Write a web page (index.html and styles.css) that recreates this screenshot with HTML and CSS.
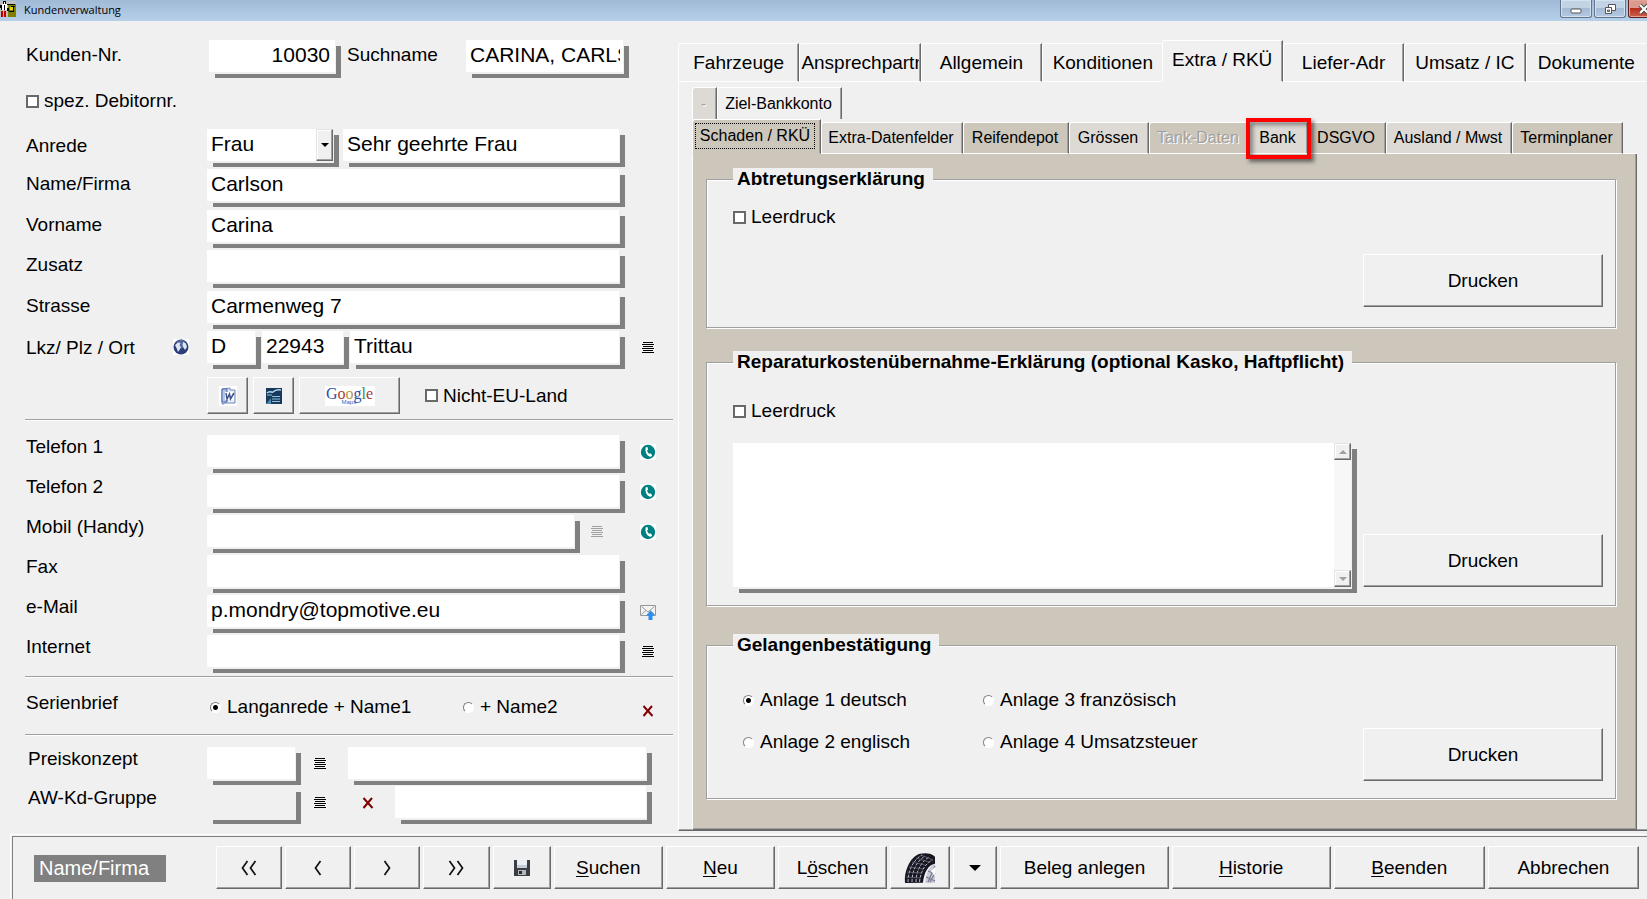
FILE: index.html
```html
<!DOCTYPE html>
<html lang="de">
<head>
<meta charset="utf-8">
<title>Kundenverwaltung</title>
<link rel="stylesheet" href="styles.css">
</head>
<body>
<svg class="defs" aria-hidden="true">
  <symbol id="i-list" viewBox="0 0 12 12"><path d="M1 0h10v1H1zM0 2h12v1H0zM1 4h10v1H1zM0 6h12v1H0zM1 8h10v1H1zM0 10h12v1H0z" fill="currentColor" shape-rendering="crispEdges"/></symbol>
  <symbol id="i-x" viewBox="0 0 12 12"><path d="M1.500 1L10.500 11M10 1L1.500 11" stroke="#800000" stroke-width="2" fill="none"/></symbol>
  <symbol id="i-phone" viewBox="0 0 16 16"><path fill="#fff" d="M0 0h16v16H0z"/><circle cx="8" cy="8" r="7.200" fill="#008080"/><path d="M5.800 3.200L7.400 3l.8 2.700-1.200.9c.4 1.300 1 2.300 2 3.200l1.400-.5 1.800 2-1.200 1.500C7.500 13 4.300 7.500 5.800 3.200z" fill="#fff"/></symbol>
  <symbol id="i-left" viewBox="0 0 8 16"><path d="M6.500 1L1.500 8l5 7" stroke="#111" stroke-width="1.700" fill="none"/></symbol>
  <symbol id="i-right" viewBox="0 0 8 16"><path d="M1.500 1l5 7-5 7" stroke="#111" stroke-width="1.700" fill="none"/></symbol>
</svg>

<div class="window">
  <header class="titlebar">
    <svg class="app-icon" width="16" height="16" viewBox="0 0 16 16" shape-rendering="crispEdges">
      <path fill="#c0c0c0" d="M0 0h16v16H0z"/><path fill="#808000" d="M8 3h8v13H8z"/>
      <path fill="#000" d="M3 0h3v3H3zM7 3h8v1H7zM0 4h2v3H0zM7 7h2v3H7zM11 5h4v1h-4zM9 10h5v1H9zM13 6h1v5h-1z"/>
      <path fill="#fff" d="M2 3h5v6H2zM4 1h1v2H4z"/><path fill="#e0d800" d="M10 6h3v3h-3z"/>
      <path fill="#000" d="M4 4h1v5H4zM1 7h1v2H1z"/><path fill="#c00000" d="M1 10h2v6H1zM4 10h2v6H4z"/>
    </svg>
    <h1>Kundenverwaltung</h1>
    <div class="win-buttons">
      <button class="win-btn" aria-label="Minimieren"><svg width="14" height="14" viewBox="0 0 14 14"><rect x="2" y="7" width="10" height="4" rx="1" fill="#fff" stroke="#555"/></svg></button>
      <button class="win-btn" aria-label="Wiederherstellen"><svg width="14" height="14" viewBox="0 0 14 14"><path d="M5.500 2.500h7v6h-7z" fill="#fff" stroke="#555"/><path d="M2.500 5.500h6v6h-6z" fill="#fff" stroke="#555"/><path d="M4.500 8h2v1.500h-2z" fill="none" stroke="#555"/></svg></button>
      <button class="win-btn close" aria-label="Schließen"><svg width="14" height="14" viewBox="0 0 14 14"><path d="M3 3l8 8M11 3l-8 8" stroke="#444" stroke-width="4"/><path d="M3 3l8 8M11 3l-8 8" stroke="#fff" stroke-width="2.200"/></svg></button>
    </div>
  </header>

  <div class="main">
    <form class="customer">
      <div class="row row-top">
        <label for="nr">Kunden-Nr.</label>
        <input class="field num" id="nr" value="10030">
        <label for="such">Suchname</label>
        <input class="field search" id="such" value="CARINA, CARLSON">
      </div>
      <label class="check debitor"><input type="checkbox">spez. Debitornr.</label>

      <div class="group address">
        <div class="row low">
          <label for="anrede">Anrede</label>
          <div class="fields wide">
            <div class="combo"><select class="field" id="anrede"><option>Frau</option><option>Herr</option><option>Firma</option></select><span class="combo-arrow"></span></div>
            <input class="field grow" aria-label="Briefanrede" value="Sehr geehrte Frau">
          </div>
        </div>
        <div class="row"><label for="name">Name/Firma</label><input class="field" id="name" value="Carlson"></div>
        <div class="row"><label for="vorname">Vorname</label><input class="field" id="vorname" value="Carina"></div>
        <div class="row"><label for="zusatz">Zusatz</label><input class="field" id="zusatz"></div>
        <div class="row"><label for="strasse">Strasse</label><input class="field" id="strasse" value="Carmenweg 7"></div>
        <div class="row low">
          <div class="label-icon"><label for="lkz">Lkz/ Plz / Ort</label>
            <button type="button" class="icon-btn" aria-label="Karte"><svg width="16" height="16" viewBox="0 0 16 16"><path fill="#fff" d="M0 0h16v16H0z"/><circle cx="8" cy="8" r="7.500" fill="#2c3f78"/><circle cx="8" cy="5" r="4.500" fill="#6f83b4" opacity=".6"/><path d="M2 6l3-2.500 2.500.5-1 2.500L8 8l-1.500 3-1.500 2-1-3zM10 3l3 1.500L14 8l-2 3-1.500-2.500-1-2z" fill="#dfe5f2"/></svg></button>
          </div>
          <div class="fields tight">
            <input class="field lkz" id="lkz" value="D">
            <input class="field plz" aria-label="Plz" value="22943">
            <input class="field grow" aria-label="Ort" value="Trittau">
          </div>
          <button type="button" class="icon-btn side" aria-label="Ortsliste"><svg width="12" height="12"><use href="#i-list"/></svg></button>
        </div>
      </div>

      <div class="row tools">
        <div class="fields">
          <button type="button" class="btn small" aria-label="Word"><svg width="18" height="20" viewBox="0 0 18 20"><path fill="#fff" d="M0 0h18v20H0z"/><path d="M3 3l8-1v2h5v13H5v1H3z" fill="#e8eef8" stroke="#6f86bb"/><path d="M3 3h5v13H3z" fill="#b6c6e6" stroke="#4a68ab"/><path d="M6 6h9v8H6z" fill="#fff"/><path d="M7 7l1 6 2.500-5 1 5L15 7" fill="none" stroke="#3a4f88" stroke-width="1.500"/></svg></button>
          <button type="button" class="btn small" aria-label="Writer"><svg width="16" height="16" viewBox="0 0 16 16"><path fill="#173a5c" d="M0 0h16v16H0z"/><path d="M1 5c3-3 5 0 6-1s4-3 8-2" stroke="#b9d6e8" fill="none" stroke-width="1.500"/><path d="M1 7h5M6 8.500h8M6 11h8M6 13.500h8" stroke="#8fc0dc"/><path d="M0 16l5-6v6z" fill="#4c86aa"/></svg></button>
          <button type="button" class="btn google"><span class="g-logo"><b class="g1">G</b><b class="g2">o</b><b class="g3">o</b><b class="g1">g</b><b class="g4">l</b><b class="g2">e</b><i>Maps</i></span></button>
          <label class="check"><input type="checkbox">Nicht-EU-Land</label>
        </div>
      </div>

      <hr>
      <div class="group contact">
        <div class="row high"><label for="tel1">Telefon 1</label><input class="field" id="tel1"><button type="button" class="icon-btn side" aria-label="Anrufen"><svg width="16" height="16"><use href="#i-phone"/></svg></button></div>
        <div class="row high"><label for="tel2">Telefon 2</label><input class="field" id="tel2"><button type="button" class="icon-btn side" aria-label="Anrufen"><svg width="16" height="16"><use href="#i-phone"/></svg></button></div>
        <div class="row high"><label for="mobil">Mobil (Handy)</label>
          <div class="fields"><input class="field grow" id="mobil"><button type="button" class="icon-btn mobile-list" aria-label="Liste" disabled><svg width="12" height="12"><use href="#i-list"/></svg></button></div>
          <button type="button" class="icon-btn side" aria-label="Anrufen"><svg width="16" height="16"><use href="#i-phone"/></svg></button></div>
        <div class="row high"><label for="fax">Fax</label><input class="field" id="fax"></div>
        <div class="row high"><label for="mail">e-Mail</label><input class="field" id="mail" value="p.mondry@topmotive.eu"><button type="button" class="icon-btn side" aria-label="E-Mail senden"><svg width="16" height="16" viewBox="0 0 16 16"><path d="M.5 1.500h15v10H.5z" fill="#f4f4f4" stroke="#999"/><path d="M1.500 2.500L8 8l6.500-5.500M1.500 10.500L6 6.500M14.500 10.500L10 6.500" stroke="#999" fill="none"/><path d="M10.500 6.500L15 11.500h-2.500V16H8.500v-4.500H6z" fill="#2b8ff0"/></svg></button></div>
        <div class="row high"><label for="web">Internet</label><input class="field" id="web"><button type="button" class="icon-btn side" aria-label="Internetliste"><svg width="12" height="12"><use href="#i-list"/></svg></button></div>
      </div>

      <hr class="hr-mid">
      <div class="row high serial">
        <span class="caption">Serienbrief</span>
        <div class="fields">
          <label class="radio first"><input type="radio" name="serie" checked>Langanrede + Name1</label>
          <label class="radio"><input type="radio" name="serie">+ Name2</label>
        </div>
        <button type="button" class="icon-btn side x-low" aria-label="Löschen"><svg width="12" height="12"><use href="#i-x"/></svg></button>
      </div>
      <hr class="hr-low">

      <div class="group pricing">
        <div class="row high price"><label for="preis">Preiskonzept</label>
          <div class="fields"><input class="field code" id="preis"><button type="button" class="icon-btn lst" aria-label="Liste"><svg width="12" height="12"><use href="#i-list"/></svg></button><span class="gap-small"></span><input class="field grow" aria-label="Preiskonzept Bezeichnung"></div></div>
        <div class="row high price"><label for="aw">AW-Kd-Gruppe</label>
          <div class="fields"><input class="field code muted" id="aw"><button type="button" class="icon-btn lst" aria-label="Liste"><svg width="12" height="12"><use href="#i-list"/></svg></button><button type="button" class="icon-btn clear" aria-label="Entfernen"><svg width="12" height="12"><use href="#i-x"/></svg></button><input class="field grow" aria-label="Gruppe Bezeichnung"></div></div>
      </div>
    </form>

    <section class="details">
      <nav class="tabs">
        <button class="tab"><span>Fahrzeuge</span></button>
        <button class="tab"><span>Ansprechpartner</span></button>
        <button class="tab"><span>Allgemein</span></button>
        <button class="tab flat"><span>Konditionen</span></button>
        <button class="tab active"><span>Extra / RKÜ</span></button>
        <button class="tab"><span>Liefer-Adr</span></button>
        <button class="tab"><span>Umsatz / IC</span></button>
        <button class="tab last"><span>Dokumente</span></button>
      </nav>
      <div class="panel">
        <div class="subtabs upper">
          <button class="subtab light t-dash" disabled>-</button>
          <button class="subtab plain t-ziel">Ziel-Bankkonto</button>
        </div>
        <div class="subtabs">
          <button class="subtab current t-schaden"><span>Schaden / RKÜ</span></button>
          <button class="subtab light t-extra">Extra-Datenfelder</button>
          <button class="subtab t-reifen">Reifendepot</button>
          <button class="subtab light t-groessen">Grössen</button>
          <button class="subtab t-tank" disabled>Tank-Daten</button>
          <button class="subtab light t-bank">Bank</button>
          <button class="subtab t-dsgvo">DSGVO</button>
          <button class="subtab light t-ausland">Ausland / Mwst</button>
          <button class="subtab t-termin">Terminplaner</button>
          <span class="subtab-rest"></span>
        </div>
        <div class="page">
          <fieldset class="box box-1">
            <legend>Abtretungserklärung</legend>
            <label class="check"><input type="checkbox">Leerdruck</label>
            <button class="btn print">Drucken</button>
          </fieldset>
          <fieldset class="box box-2">
            <legend>Reparaturkostenübernahme-Erklärung (optional Kasko, Haftpflicht)</legend>
            <label class="check"><input type="checkbox">Leerdruck</label>
            <div class="memo">
              <textarea aria-label="Text zur Reparaturkostenübernahme"></textarea>
              <div class="scroll"><button class="btn up" aria-label="Nach oben"></button><button class="btn down" aria-label="Nach unten"></button></div>
            </div>
            <button class="btn print">Drucken</button>
          </fieldset>
          <fieldset class="box box-3">
            <legend>Gelangenbestätigung</legend>
            <div class="options">
              <label class="radio"><input type="radio" name="anlage" checked>Anlage 1 deutsch</label>
              <label class="radio"><input type="radio" name="anlage">Anlage 3 französisch</label>
              <label class="radio"><input type="radio" name="anlage">Anlage 2 englisch</label>
              <label class="radio"><input type="radio" name="anlage">Anlage 4 Umsatzsteuer</label>
            </div>
            <button class="btn print">Drucken</button>
          </fieldset>
        </div>
      </div>
    </section>
  </div>

  <footer class="bar">
    <span class="mode">Name/Firma</span>
    <div class="bar-buttons">
      <button class="btn b-nav" aria-label="Erster"><svg width="8" height="16"><use href="#i-left"/></svg><svg width="8" height="16"><use href="#i-left"/></svg></button>
      <button class="btn b-nav" aria-label="Zurück"><svg width="8" height="16"><use href="#i-left"/></svg></button>
      <button class="btn b-nav" aria-label="Weiter"><svg width="8" height="16"><use href="#i-right"/></svg></button>
      <button class="btn b-nav" aria-label="Letzter"><svg width="8" height="16"><use href="#i-right"/></svg><svg width="8" height="16"><use href="#i-right"/></svg></button>
      <button class="btn b-save" aria-label="Speichern"><svg width="16" height="16" viewBox="0 0 16 16"><path fill="#3b3d45" d="M0 0h16v16H0z"/><path fill="#e9eef5" d="M3 0h10v8H3z"/><path fill="#c5ccd8" d="M3 5h10v3H3z"/><path fill="#b4b6ba" d="M4 10h8v5H4z"/><path fill="#2a2c33" d="M5 11h3v3H5z"/></svg></button>
      <button class="btn b-std"><span><u>S</u>uchen</span></button>
      <button class="btn b-std"><span><u>N</u>eu</span></button>
      <button class="btn b-std"><span>L<u>ö</u>schen</span></button>
      <button class="btn b-tire" aria-label="Reifen"><svg width="32" height="30" viewBox="0 0 32 30">
        <path d="M1 30C0 17 7 3 16 1c6-1.500 12-.5 15 3v26z" fill="#f6f6fa"/>
        <path d="M1 30C0 17 7 3 16 .8c6-1.200 12-.3 15 3v7c-7 1-11 9-12 19z" fill="#17171f"/>
        <path d="M4 29C4 18 9 7 18 2M8 29c0-11 4-20 13-26M12 29c0-10 4-19 13-25M15.500 29c1-10 5-18 13-22" fill="none" stroke="#b9bcd0" stroke-width="1" stroke-dasharray="3 1.300"/>
        <path d="M2 24l14 1M3 19l14 1M5 14l14 2M8 9l13 3M12 5l13 4M17 2l12 5" stroke="#696b7c" stroke-width=".8"/>
        <path d="M31 11c-6 2-9 9-10 19h10z" fill="#c9cbd9"/>
        <path d="M31 13l-7 16M31 20l-5 9M24 18l7 3M22 24l9 4" stroke="#777990" stroke-width="1.200"/>
        <path d="M31 14l-4 4 4 5z" fill="#fff"/>
      </svg></button>
      <button class="btn b-drop" aria-label="Weitere"><span class="tri"></span></button>
      <button class="btn b-beleg">Beleg anlegen</button>
      <button class="btn b-hist"><span><u>H</u>istorie</span></button>
      <button class="btn b-end"><span><u>B</u>eenden</span></button>
      <button class="btn b-end">Abbrechen</button>
    </div>
  </footer>
</div>
</body>
</html>
```
FILE: styles.css
```css
:root {
  --face: #f0f0f0;
  --tan: #ccc6bb;
  --tan-light: #dddad5;
  --shade: #a0a0a0;
  --dark: #696969;
  --drop: #808080;
}
* { box-sizing: border-box; }
body {
  margin: 0;
  background: var(--face);
  color: #000;
  font-family: "Liberation Sans", Arial, sans-serif;
  font-size: 19px;
  line-height: 22px;
}
button, input, select, textarea { font: inherit; color: inherit; margin: 0; border-radius: 0; }
svg { display: block; }
.defs { position: absolute; width: 0; height: 0; }
.window { display: flex; flex-direction: column; min-height: 100vh; overflow: hidden; }

/* title bar */
.titlebar {
  display: flex;
  height: 21px;
  background: linear-gradient(#a0b9d6, #b7d0ea);
  overflow: hidden;
}
.app-icon { margin-top: 1px; flex: none; }
.titlebar h1 { margin: 0 0 0 8px; flex: 1; font: 11px/20px "Open Sans", "Noto Sans", sans-serif; }
.win-buttons { display: flex; gap: 2px; margin-right: -13px; }
.win-btn {
  width: 32px;
  height: 18px;
  padding: 0;
  display: flex;
  align-items: center;
  justify-content: center;
  border: 1px solid #63748c;
  border-top: 0;
  border-radius: 0 0 3px 3px;
  box-shadow: inset 0 0 0 1px #d5e2f0;
  background: linear-gradient(#c3d3e6 45%, #a4bad4 50%, #b4cae2);
}
.win-btn.close { border-color: #5d1d18; box-shadow: inset 0 0 0 1px #e2a59a; background: linear-gradient(#dc9a8c 45%, #b8301c 50%, #c9604c); }

/* two columns */
.main { display: flex; flex: 1; }
.customer { flex: 1 1 678px; min-width: 0; padding: 19px 5px 11px 25px; }
.details { flex: 1 1 969px; min-width: 0; display: flex; flex-direction: column; padding-top: 19px; }

/* form rows */
.row { display: grid; grid-template-columns: 182px minmax(0, 1fr) 54px; align-items: start; }
.row > label, .caption, .label-icon > label { padding-left: 1px; line-height: 30px; white-space: nowrap; }
.low > label, .low .label-icon > label { padding-top: 2px; }
.high > label, .high > .caption { line-height: 23px; }
.label-icon { display: flex; justify-content: space-between; padding-right: 18px; }
.label-icon .icon-btn { padding-top: 0; }
.field {
  display: block;
  width: 100%;
  min-width: 0;
  height: 32px;
  padding: 0 3px 2px 4px;
  border: 0;
  outline: 0;
  background: #fff;
  font-size: 21px;
  box-shadow: 1px 2px 0 var(--face), 6px 6px 0 var(--drop);
}
.field.muted { background: var(--face); }
.num { text-align: right; padding-right: 5px; }
.row-top { grid-template-columns: 184px 126px 131px minmax(0, 1fr); padding-right: 50px; }
.row-top > .num + label { padding-left: 12px; }
.check, .radio { display: flex; align-items: center; white-space: nowrap; }
.check input {
  appearance: none;
  width: 13px;
  height: 13px;
  margin-right: 5px;
  border: 2px solid var(--dark);
  background: #fff;
}
.radio input {
  appearance: none;
  width: 11px;
  height: 11px;
  margin-right: 6px;
  border: 1px solid;
  border-color: #808080 #fff #fff #808080;
  border-radius: 50%;
  background: #fff;
}
.radio input:checked { background: radial-gradient(circle, #000 0 2px, #fff 3px); }
.debitor { margin: 18px 0 17px; padding-left: 1px; }

.group { display: flex; flex-direction: column; gap: 8px; }
.address .row:nth-child(odd) { padding-top: 1px; }
.address .row:first-child { padding-top: 0; }
.fields { display: flex; align-items: flex-start; }
.wide { gap: 10px; }
.tight { gap: 7px; }
.grow { flex: 1; }
.lkz { width: 48px; }
.plz { width: 81px; }
.combo { position: relative; width: 126px; }
.combo select { appearance: none; }
.combo-arrow {
  position: absolute;
  top: 0;
  right: 0;
  width: 17px;
  height: 32px;
  background: var(--face);
  border: 1px solid;
  border-color: #e3e3e3 var(--dark) var(--dark) #e3e3e3;
  box-shadow: inset -1px -1px var(--shade), inset 1px 1px #fff;
  pointer-events: none;
}
.combo-arrow::after {
  content: "";
  position: absolute;
  left: 4px;
  top: 13px;
  border: 4px solid transparent;
  border-top-color: #000;
  border-bottom: 0;
}
.icon-btn {
  display: flex;
  align-items: center;
  justify-content: center;
  height: 32px;
  padding: 2px 0 0;
  border: 0;
  background: none;
  color: #000;
}
.icon-btn:disabled { color: var(--shade); }
.side { padding-left: 4px; }
.x-low { padding-top: 8px; }
.mobile-list { width: 45px; padding-right: 0; }

/* raised buttons */
.btn {
  display: flex;
  align-items: center;
  justify-content: center;
  padding: 0;
  background: var(--face);
  border: 1px solid;
  border-color: #fff var(--dark) var(--dark) #fff;
  box-shadow: inset -1px -1px var(--shade);
  white-space: nowrap;
}
.tools { margin-top: 14px; }
.tools .fields { grid-column: 2 / 4; align-items: center; gap: 5px; }
.small { width: 41px; height: 37px; }
.google { width: 101px; height: 37px; }
.tools .check { margin-left: 20px; }
.g-logo {
  position: relative;
  width: 50px;
  height: 20px;
  background: #fff;
  font: 16px/15px "Liberation Serif", serif;
}
.g-logo b { font-weight: 400; }
.g-logo i { position: absolute; left: 17px; top: 13px; font: 6px/6px "Liberation Sans", sans-serif; color: #3c62b8; }
.g1 { color: #2b4fa8; }
.g2 { color: #b03a3a; }
.g3 { color: #b39a2c; }
.g4 { color: #3d8a4c; }

hr { margin: 5px 0 14px; height: 2px; border: 0; border-top: 1px solid var(--shade); border-bottom: 1px solid #fff; }
.hr-mid { margin: 9px 0 13px; }
.hr-low { margin: 11px 0; }
.serial .radio { line-height: 32px; }
.serial .fields { padding-left: 3px; }
.serial .first { width: 253px; }
.pricing { gap: 7px; }
.price { grid-template-columns: 182px minmax(0, 1fr); padding-right: 27px; }
.price > label { padding-left: 3px; }
.code { width: 88px; }
.lst { width: 38px; padding-left: 12px; }
.gap-small { width: 15px; }
.clear { width: 62px; padding-left: 8px; }

/* main tabs */
.tabs { display: flex; align-items: flex-end; height: 42px; }
.tab {
  flex: 1 1 0;
  min-width: 0;
  height: 39px;
  padding: 0 1px;
  background: var(--face);
  border: 1px solid #fff;
  border-right-color: var(--dark);
  border-radius: 3px 0 0 0;
  box-shadow: inset -1px 0 var(--shade);
}
.tab span { display: block; overflow: hidden; white-space: nowrap; }
.tab.active { height: 42px; margin-left: -2px; padding-bottom: 2px; border-bottom-color: var(--face); }
.tab.flat, .tab.last { border-right-color: #fff; box-shadow: none; }
.tab.last { border-right-color: var(--face); }
.panel {
  flex: 1;
  display: flex;
  flex-direction: column;
  padding: 5px 10px 0 13px;
  border-left: 1px solid #fff;
  border-bottom: 1px solid var(--dark);
  box-shadow: inset 0 -1px var(--shade);
}

/* inner tabs */
.subtabs { display: flex; align-items: flex-end; height: 35px; font-size: 16px; }
.upper { height: 32px; }
.subtab {
  height: 32px;
  padding: 0 2px 0 0;
  background: var(--tan);
  border: 1px solid #fff;
  border-right-color: var(--dark);
  border-radius: 3px 0 0 0;
  box-shadow: inset -1px 0 var(--shade);
  white-space: nowrap;
}
.light { background: var(--tan-light); }
.plain { background: var(--face); }
.upper .subtab { border-bottom: 0; }
.subtab:disabled { color: var(--shade); text-shadow: 1px 1px #fff; }
.current { height: 35px; border-bottom-color: var(--tan); padding: 3px 5px 4px 2px; }
.current span { display: block; height: 26px; line-height: 24px; border: 1px dotted #000; }
.subtab-rest { flex: 1; border-bottom: 1px solid #fff; }
.t-dash { flex: 0 1 25px; }
.t-ziel { flex: 0 1 125px; }
.t-schaden { flex: 0 1 129px; }
.t-extra { flex: 0 1 142px; }
.t-reifen { flex: 0 1 106px; }
.t-groessen { flex: 0 1 80px; }
.t-tank { flex: 0 1 100px; }
.t-bank { flex: 0 1 59px; position: relative; z-index: 1; }
.t-dsgvo { flex: 0 1 78px; }
.t-ausland { flex: 0 1 126px; }
.t-termin { flex: 0 1 111px; }
.t-bank::after {
  content: "";
  position: absolute;
  inset: -5px -4px -6px;
  border: 4px solid #f00;
  box-shadow: 3px 3px 4px rgba(0, 0, 0, .5), inset 3px 3px 4px rgba(0, 0, 0, .4);
}

/* page of group boxes */
.page {
  flex: 1;
  padding: 14px 20px 29px 13px;
  background: var(--tan);
  border: 1px solid var(--dark);
  border-width: 0 1px 1px;
  border-left-color: #fff;
  box-shadow: inset -1px -1px var(--shade);
}
.box {
  display: grid;
  grid-template-columns: minmax(0, 1fr) 240px;
  column-gap: 12px;
  margin: 0;
  min-width: 0;
  padding: 16px 12px 20px 26px;
  border: 1px solid var(--shade);
  background: var(--face);
  box-shadow: inset 1px 1px #fff, 1px 1px #fff;
}
.box legend { padding: 0 8px 0 4px; background: var(--face); font-weight: 700; }
.print { height: 53px; grid-column: 2; align-self: end; }
.box .check { grid-column: 1 / 3; }
.box-1 .print { margin-top: 26px; }
.box-2 { margin-top: 23px; padding-top: 27px; padding-bottom: 18px; }
.box-3 { margin-top: 28px; padding-top: 33px; padding-bottom: 17px; }
.box-3 .print { margin-top: 39px; }
.memo {
  display: flex;
  height: 144px;
  margin-top: 21px;
  background: #fff;
  box-shadow: 1px 2px 0 var(--face), 6px 6px 0 var(--drop);
}
.memo textarea { flex: 1; min-width: 0; border: 0; outline: 0; resize: none; background: #fff; }
.scroll { width: 17px; display: flex; flex-direction: column; justify-content: space-between; background: #f7f7f7; }
.scroll .btn { height: 17px; border-color: #e3e3e3 var(--dark) var(--dark) #e3e3e3; box-shadow: inset -1px -1px var(--shade), inset 1px 1px #fff; }
.scroll .btn::after { content: ""; border: 4px solid transparent; }
.scroll .up::after { border-bottom-color: var(--shade); border-top: 0; }
.scroll .down::after { border-top-color: var(--shade); border-bottom: 0; }
.options { display: grid; grid-template-columns: 240px 1fr; row-gap: 20px; align-content: start; padding-left: 10px; }

/* bottom bar */
.bar {
  display: flex;
  align-items: flex-start;
  margin: 3px 0 0 10px;
  height: 65px;
  padding: 11px 8px 0 22px;
  border: 1px solid #fff;
  border-width: 1px 0 0 1px;
  box-shadow: inset 1px 1px var(--face), inset 2px 2px #808080;
}
.mode { width: 132px; margin: 9px 50px 0 1px; padding: 0 5px; background: #808080; color: #fff; font-size: 20px; line-height: 27px; }
.bar-buttons { flex: 1; min-width: 0; display: flex; gap: 3px; }
.bar-buttons .btn { height: 43px; }
.bar-buttons u { text-underline-offset: 2px; text-decoration-thickness: 1px; }
.b-nav { flex: 1 1 66px; }
.b-save { flex: 1 1 58px; }
.b-std { flex: 1 1 109px; }
.b-tire { flex: 1 1 60px; }
.b-drop { flex: 1 1 44px; }
.b-beleg { flex: 1 1 168px; }
.b-hist { flex: 1 1 159px; }
.b-end { flex: 1 1 151px; }
.tri { border: 6px solid transparent; border-top-color: #000; border-bottom: 0; }
```
